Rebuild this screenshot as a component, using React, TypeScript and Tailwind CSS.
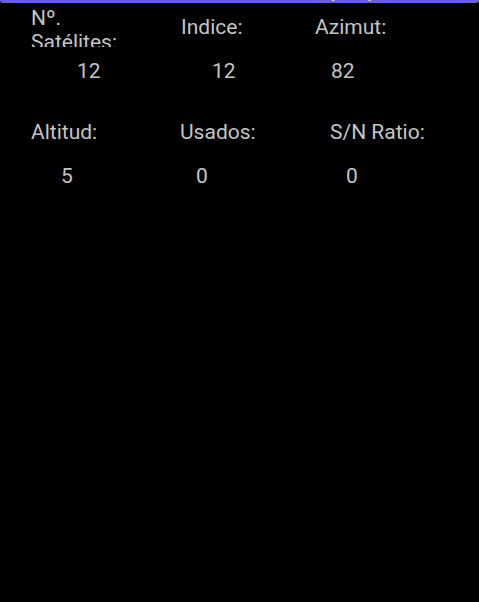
const font = { fontFamily: 'Roboto, "Liberation Sans", sans-serif' };

export default function App() {
  return (
    <div className="w-[479px] h-[602px] bg-black text-[#c4c4c4] text-[21px] leading-[24px] overflow-hidden" style={font}>
      {/* header bar, mostly scrolled off */}
      <div className="h-[3px] bg-[#6a5cee] rounded-b-[4px] overflow-hidden relative">
        <div className="flex text-[#e8e04a] text-[20px] leading-[20px] -mt-[17px] font-bold tracking-[2px]">
          <span className="ml-[75px] w-[230px]">10:43 AM</span>
          <span>24/05/17</span>
        </div>
      </div>

      {/* row 1 labels */}
      <div className="flex h-[44px]">
        <div className="w-[181px] pl-[31px] pt-[3px] overflow-hidden">
          Nº.
          <br />
          Satélites:
        </div>
        <div className="w-[134px] pt-[12px]">Indice:</div>
        <div className="pt-[12px]">Azimut:</div>
      </div>

      {/* row 1 values */}
      <div className="flex mt-[12px]">
        <div className="w-[212px] pl-[77px]">12</div>
        <div className="w-[119px]">12</div>
        <div>82</div>
      </div>

      {/* row 2 labels */}
      <div className="flex mt-[37px]">
        <div className="w-[180px] pl-[31px]">Altitud:</div>
        <div className="w-[150px]">Usados:</div>
        <div>S/N Ratio:</div>
      </div>

      {/* row 2 values */}
      <div className="flex mt-[20px]">
        <div className="w-[196px] pl-[61px]">5</div>
        <div className="w-[150px]">0</div>
        <div>0</div>
      </div>
    </div>
  );
}
